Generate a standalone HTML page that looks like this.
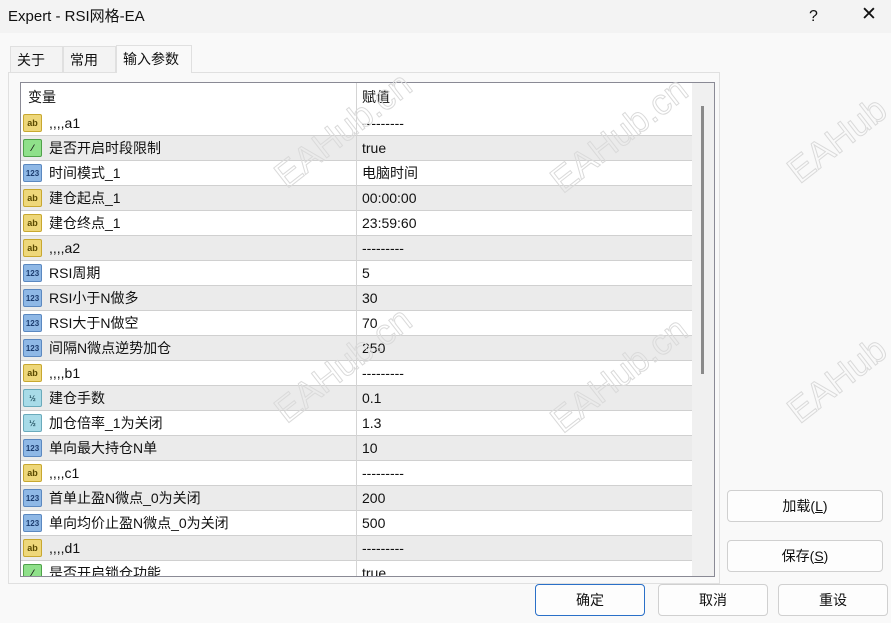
<!DOCTYPE html>
<html><head><meta charset="utf-8"><style>
*{box-sizing:border-box;margin:0;padding:0}
html{width:891px;height:623px;overflow:hidden}
body{width:891px;height:623px;background:#f9f9f9;font-family:"Liberation Sans","Noto Sans CJK SC",sans-serif;font-size:14px;line-height:17px;color:#111;position:relative;overflow:hidden}
.abs{position:absolute}
.title{left:0;top:0;width:891px;height:33px;background:#f3f3f3}
.tab{top:46px;height:26px;border:1px solid #e0e0e0;border-bottom:none;background:#f3f3f3;padding:5px 0 0 6px}
.panel{left:8px;top:72px;width:712px;height:512px;border:1px solid #e0e0e0;background:#f9f9f9}
.list{left:20px;top:82px;width:695px;height:495px;border:1px solid #8a8a95;background:#fff;overflow:hidden}
.row{position:absolute;left:0;width:672px;height:25px;border-bottom:1px solid #d0d0d0}
.row.g{background:#ebebeb}
.row .n{position:absolute;left:28px;top:4px;line-height:17px}
.row .v{position:absolute;left:341px;top:4px;line-height:17px}
.row .sep{position:absolute;left:335px;top:0;width:1px;height:25px;background:#d4d4d4}
.ic{position:absolute;left:2px;top:3px;width:19px;height:18px;border-radius:2px;font-size:9px;font-weight:bold;text-align:center;line-height:17px}
.ab{background:#eed77a;color:#5a4a00;border:1px solid #c8a830}
.n123{background:#8fb8e6;color:#1d3d70;border:1px solid #5b88c0;font-size:8px}
.bo{background:#8fe08a;border:1px solid #4fa24a}
.hf{background:#a8dbe8;color:#225060;border:1px solid #6aaabb;font-size:8px}
.btn{height:32px;border:1px solid #d0d0d0;border-radius:4px;background:#fdfdfd;text-align:center;line-height:30px}
.wm{position:absolute;color:transparent;-webkit-text-stroke:1px #dadada;font-size:36px;line-height:40px;transform:rotate(-38deg);font-family:"Liberation Sans",sans-serif;white-space:nowrap}
</style></head><body>
<div class="abs title"><span class="abs" style="left:8px;top:8px;font-size:15px">Expert - RSI网格-EA</span>
<span class="abs" style="left:809px;top:8px;font-size:16px">?</span>
<span class="abs" style="left:861px;top:6px;font-size:19px;font-weight:300">✕</span></div>
<div class="abs panel"></div>
<div class="abs tab" style="left:10px;width:53px">关于</div>
<div class="abs tab" style="left:63px;width:53px">常用</div>
<div class="abs tab" style="left:116px;width:76px;top:45px;height:28px;background:#f9f9f9">输入参数</div>
<div class="abs list">
<div class="row" style="top:0;height:28px;border:none"><span class="n" style="left:7px;top:6px">变量</span><span class="sep" style="height:28px"></span><span class="v" style="top:6px">赋值</span></div>
<div id="rows"></div>
<div class="abs" style="left:671px;top:0;width:22px;height:495px;background:#f0f0f0"></div>
<div class="abs" style="left:680px;top:23px;width:3px;height:268px;background:#8a8a8a"></div>
</div>
<div class="abs btn" style="left:727px;top:490px;width:156px">加载(<u>L</u>)</div>
<div class="abs btn" style="left:727px;top:540px;width:156px">保存(<u>S</u>)</div>
<div class="abs btn" style="left:535px;top:584px;width:110px;border-color:#2a70c8">确定</div>
<div class="abs btn" style="left:658px;top:584px;width:110px">取消</div>
<div class="abs btn" style="left:778px;top:584px;width:110px">重设</div>
<div class="wm" style="left:262px;top:110px">EAHub.cn</div>
<div class="wm" style="left:538px;top:115px">EAHub.cn</div>
<div class="wm" style="left:780px;top:120px">EAHub</div>
<div class="wm" style="left:262px;top:345px">EAHub.cn</div>
<div class="wm" style="left:538px;top:355px">EAHub.cn</div>
<div class="wm" style="left:780px;top:360px">EAHub</div>
<script>
var d=[["ab",",,,,a1","---------"],["bo","是否开启时段限制","true"],["n123","时间模式_1","电脑时间"],["ab","建仓起点_1","00:00:00"],["ab","建仓终点_1","23:59:60"],["ab",",,,,a2","---------"],["n123","RSI周期","5"],["n123","RSI小于N做多","30"],["n123","RSI大于N做空","70"],["n123","间隔N微点逆势加仓","250"],["ab",",,,,b1","---------"],["hf","建仓手数","0.1"],["hf","加仓倍率_1为关闭","1.3"],["n123","单向最大持仓N单","10"],["ab",",,,,c1","---------"],["n123","首单止盈N微点_0为关闭","200"],["n123","单向均价止盈N微点_0为关闭","500"],["ab",",,,,d1","---------"],["bo","是否开启锁仓功能","true"]];
var t={ab:"ab",n123:"123",bo:"⁄",hf:"½"};var h="";
d.forEach(function(r,i){h+='<div class="row'+(i%2?' g':'')+'" style="top:'+(28+i*25)+'px"><span class="ic '+r[0]+'">'+t[r[0]]+'</span><span class="n">'+r[1]+'</span><span class="sep"></span><span class="v">'+r[2]+'</span></div>';});
document.getElementById("rows").innerHTML=h;
</script>
</body></html>
